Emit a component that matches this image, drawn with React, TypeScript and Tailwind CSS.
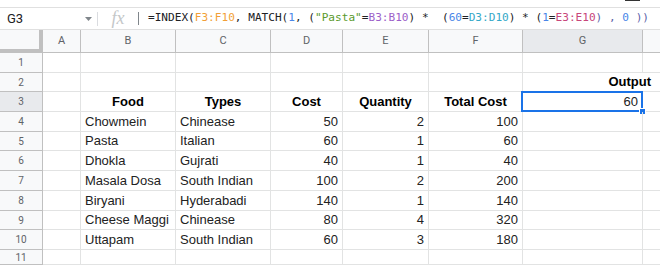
import React from "react";

const colW = [38, 95, 95, 72, 86, 94, 120];
const colL = ["A", "B", "C", "D", "E", "F", "G"];
const rowH = [20, 19, 20, 20, 19, 20, 20, 20, 19, 20, 15];

type Cell = { t?: string; a?: "l" | "c" | "r"; b?: boolean };

const data: string[][] = [
  ["Chowmein", "Chinease", "50", "2", "100"],
  ["Pasta", "Italian", "60", "1", "60"],
  ["Dhokla", "Gujrati", "40", "1", "40"],
  ["Masala Dosa", "South Indian", "100", "2", "200"],
  ["Biryani", "Hyderabadi", "140", "1", "140"],
  ["Cheese Maggi", "Chinease", "80", "4", "320"],
  ["Uttapam", "South Indian", "60", "3", "180"],
];

function rowCells(r: number): Cell[] {
  const empty: Cell[] = [{}, {}, {}, {}, {}, {}, {}];
  if (r === 3) {
    return [
      {},
      { t: "Food", a: "c", b: true },
      { t: "Types", a: "c", b: true },
      { t: "Cost", a: "c", b: true },
      { t: "Quantity", a: "c", b: true },
      { t: "Total Cost", a: "c", b: true },
      { t: "60", a: "r" },
    ];
  }
  if (r >= 4 && r <= 10) {
    const d = data[r - 4];
    return [
      {},
      { t: d[0], a: "l" },
      { t: d[1], a: "l" },
      { t: d[2], a: "r" },
      { t: d[3], a: "r" },
      { t: d[4], a: "r" },
      {},
    ];
  }
  return empty;
}

const F = ({ c, children }: { c: string; children: React.ReactNode }) => (
  <span style={{ color: c }}>{children}</span>
);

export default function App() {
  const blue = "#4a86e8";
  const dark = "#202124";
  return (
    <div
      className="w-[660px] h-[265px] overflow-hidden bg-white relative"
      style={{ fontFamily: '"Liberation Sans", Arial, sans-serif' }}
    >
      {/* top strip */}
      <div className="h-[8px] border-b border-[#e0e0e0] flex justify-end">
        <div className="w-[15px] h-[1px] bg-[#333] mr-[20px]" />
      </div>
      {/* formula bar */}
      <div className="h-[22px] flex items-center border-b border-[#e0e0e0]">
        <div
          className="w-[97px] flex items-center pl-[7px] pr-[5px] text-[13px] text-[#202124]"
          style={{ fontFamily: "Roboto, sans-serif" }}
        >
          <span className="flex-1">G3</span>
          <svg width="7" height="4" viewBox="0 0 7 4">
            <path d="M0 0 L7 0 L3.5 4 Z" fill="#80868b" />
          </svg>
        </div>
        <div className="w-[1px] h-[14px] bg-[#dadce0]" />
        <div
          className="w-[40px] flex justify-center text-[18px] italic text-[#c4c7c9]"
          style={{ fontFamily: '"Liberation Serif", serif' }}
        >
          fx
        </div>
        <div className="w-[1px] h-[13px] bg-[#80868b]" />
        <div
          className="pl-[9px] text-[11.1px] whitespace-pre text-[#202124]"
          style={{ fontFamily: '"DejaVu Sans Mono", monospace' }}
        >
          <F c={dark}>=INDEX(</F>
          <F c="#f29f37">F3:F10</F>
          <F c={dark}>, MATCH(</F>
          <F c={blue}>1</F>
          <F c={dark}>, (</F>
          <F c="#5a9a2c">"Pasta"</F>
          <F c={dark}>=</F>
          <F c="#9c5fc9">B3:B10</F>
          <F c={dark}>{") *  ("}</F>
          <F c={blue}>60</F>
          <F c={dark}>=</F>
          <F c="#35a8c8">D3:D10</F>
          <F c={dark}>{") * ("}</F>
          <F c={blue}>1</F>
          <F c={dark}>=</F>
          <F c="#c8467a">E3:E10</F>
          <F c="#5c5fa8">{") , "}</F>
          <F c={blue}>0</F>
          <F c="#5c5fa8">{" ))"}</F>
        </div>
      </div>
      {/* column header */}
      <div
        className="flex h-[23px] text-[11px] text-[#5f6368]"
        style={{ fontFamily: "Roboto, sans-serif" }}
      >
        <div className="w-[43px] shrink-0 bg-[#f8f9fa] border-r-[4px] border-b-[4px] border-[#c0c0c0]" />
        {colL.map((l, i) => (
          <div
            key={l}
            className={`shrink-0 flex items-center justify-center border-r border-b border-[#c0c0c0] ${
              l === "G" ? "bg-[#e8eaed]" : "bg-[#f8f9fa]"
            }`}
            style={{ width: colW[i] }}
          >
            {l}
          </div>
        ))}
        <div className="flex-1 bg-[#f8f9fa] border-b border-[#c0c0c0]" />
      </div>
      {/* rows */}
      {rowH.map((h, ri) => {
        const r = ri + 1;
        const cells = rowCells(r);
        return (
          <div key={r} className="flex" style={{ height: h }}>
            <div
              className={`w-[43px] shrink-0 flex items-center justify-center border-r border-b border-[#c0c0c0] text-[10px] text-[#5f6368] ${
                r === 3 ? "bg-[#e8eaed]" : "bg-[#f8f9fa]"
              }`}
              style={{ fontFamily: "Roboto, sans-serif" }}
            >
              {r}
            </div>
            {cells.map((c, ci) => (
              <div
                key={ci}
                className={`shrink-0 relative flex items-center px-[4px] border-r border-b border-[#e2e3e3] text-[13px] whitespace-nowrap ${
                  c.a === "c" ? "justify-center" : c.a === "r" ? "justify-end" : "justify-start"
                } ${c.b ? "font-bold text-black" : "text-[#222]"}`}
                style={{ width: colW[ci] }}
              >
                {c.t}
                {r === 2 && ci === 6 && (
                  <span className="absolute right-[-9px] top-0 bottom-0 flex items-center bg-white pl-[2px] font-bold text-black">
                    Output
                  </span>
                )}
                {r === 3 && ci === 6 && (
                  <>
                    <div className="absolute left-[-2px] top-[-1px] right-[-1px] bottom-[-1px] border-2 border-[#1a73e8]" />
                    <div className="absolute right-[-4px] bottom-[-4px] w-[7px] h-[7px] bg-[#1a73e8] border border-white" />
                  </>
                )}
              </div>
            ))}
            <div className="flex-1 border-b border-[#e2e3e3]" />
          </div>
        );
      })}
    </div>
  );
}
